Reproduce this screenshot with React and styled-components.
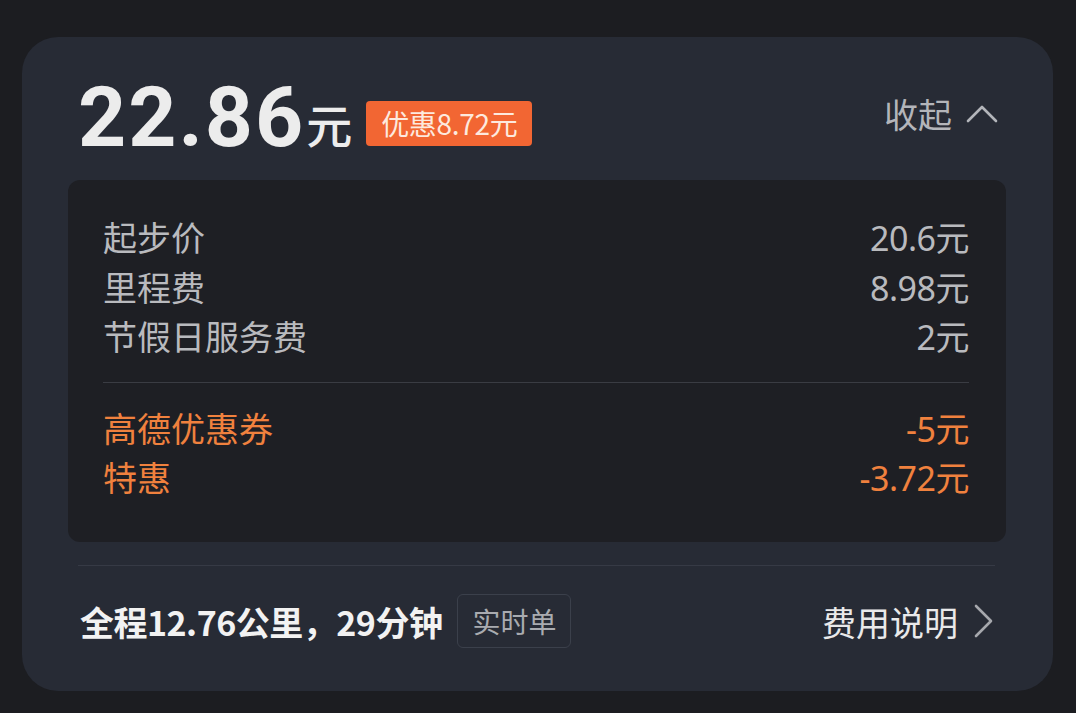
import React from 'react'
import styled, { createGlobalStyle } from 'styled-components'

const GlobalStyle = createGlobalStyle`
  html, body {
    margin: 0;
    padding: 0;
    background: #1c1d21;
  }
  body {
    font-family: "Noto Sans CJK SC", "Noto Sans", sans-serif;
  }
`

const Page = styled.div`
  width: 1076px;
  height: 713px;
  padding: 37px 23px 0 22px;
  box-sizing: border-box;
`

const Card = styled.div`
  height: 654px;
  background: #272b35;
  border-radius: 36px;
  padding: 0 47px 0 46px;
  box-sizing: border-box;
  display: flex;
  flex-direction: column;
`

const Header = styled.div`
  height: 143px;
  display: flex;
  align-items: center;
  justify-content: space-between;
  padding: 18px 8px 0 10px;
  box-sizing: border-box;
`

const PriceGroup = styled.div`
  display: flex;
  align-items: center;
`

const Amount = styled.span`
  font-family: Roboto, "Noto Sans", sans-serif;
  font-weight: 700;
  font-size: 84px;
  line-height: 1;
  letter-spacing: 2px;
  color: #ececec;
`

const Unit = styled.span`
  font-size: 46px;
  font-weight: 500;
  color: #ececec;
  margin-left: 1px;
  margin-top: 10px;
`

const Badge = styled.span`
  margin-left: 14px;
  margin-top: 12px;
  height: 45px;
  padding: 0 15px;
  border-radius: 4px;
  background: #f26633;
  color: #fde9de;
  font-size: 28px;
  line-height: 45px;
  letter-spacing: -0.3px;
`

const Toggle = styled.div`
  display: flex;
  align-items: center;
  gap: 14px;
  font-size: 34px;
  color: #b3b5ba;
  margin-top: -8px;
`

const Breakdown = styled.div`
  background: #1e1f24;
  border-radius: 12px;
  padding: 32px 37px 40px 35px;
`

const Row = styled.div`
  display: flex;
  justify-content: space-between;
  align-items: center;
  height: 49.5px;
  font-size: 34px;
  color: ${({ $accent }) => ($accent ? '#f0813e' : '#b9babe')};
`

const Value = styled.span`
  font-family: "Noto Sans", "Noto Sans CJK SC", sans-serif;
  letter-spacing: -0.5px;
`

const InnerRule = styled.div`
  height: 1px;
  background: #3a3c43;
  margin: 21px 0 20px;
`

const FooterRule = styled.div`
  height: 1px;
  background: #363a45;
  margin: 23px 11px 0 10px;
`

const Footer = styled.div`
  flex: 1;
  display: flex;
  align-items: center;
  justify-content: space-between;
  padding: 0 12px 14px 12px;
`

const Trip = styled.div`
  display: flex;
  align-items: center;
  gap: 15px;
`

const TripText = styled.span`
  font-size: 34px;
  font-weight: 700;
  color: #f2f2f2;
  letter-spacing: -0.5px;
`

const Tag = styled.span`
  height: 52px;
  padding: 0 14px;
  border: 1px solid #3b404b;
  border-radius: 6px;
  font-size: 28px;
  line-height: 52px;
  color: #a9abb0;
`

const Link = styled.div`
  display: flex;
  align-items: center;
  gap: 16px;
  font-size: 34px;
  color: #e9e9ea;
`

const ChevronUp = () => (
  <svg width="32" height="18" viewBox="0 0 32 18" fill="none">
    <path d="M2 16 L16 2 L30 16" stroke="#b3b5ba" strokeWidth="2.6" strokeLinecap="round" strokeLinejoin="round" />
  </svg>
)

const ChevronRight = () => (
  <svg width="20" height="34" viewBox="0 0 20 34" fill="none">
    <path d="M2 2 L17 17 L2 32" stroke="#a6a8ad" strokeWidth="2.6" strokeLinecap="round" strokeLinejoin="round" />
  </svg>
)

const fees = [
  { label: '起步价', value: '20.6元' },
  { label: '里程费', value: '8.98元' },
  { label: '节假日服务费', value: '2元' },
]

const discounts = [
  { label: '高德优惠券', value: '-5元' },
  { label: '特惠', value: '-3.72元' },
]

const App = () => (
  <Page>
    <GlobalStyle />
    <Card>
      <Header>
        <PriceGroup>
          <Amount>22.86</Amount>
          <Unit>元</Unit>
          <Badge>优惠8.72元</Badge>
        </PriceGroup>
        <Toggle>
          收起
          <ChevronUp />
        </Toggle>
      </Header>
      <Breakdown>
        {fees.map((f) => (
          <Row key={f.label}>
            <span>{f.label}</span>
            <Value>{f.value}</Value>
          </Row>
        ))}
        <InnerRule />
        {discounts.map((d) => (
          <Row key={d.label} $accent>
            <span>{d.label}</span>
            <Value>{d.value}</Value>
          </Row>
        ))}
      </Breakdown>
      <FooterRule />
      <Footer>
        <Trip>
          <TripText>全程12.76公里，29分钟</TripText>
          <Tag>实时单</Tag>
        </Trip>
        <Link>
          费用说明
          <ChevronRight />
        </Link>
      </Footer>
    </Card>
  </Page>
)

export default App
